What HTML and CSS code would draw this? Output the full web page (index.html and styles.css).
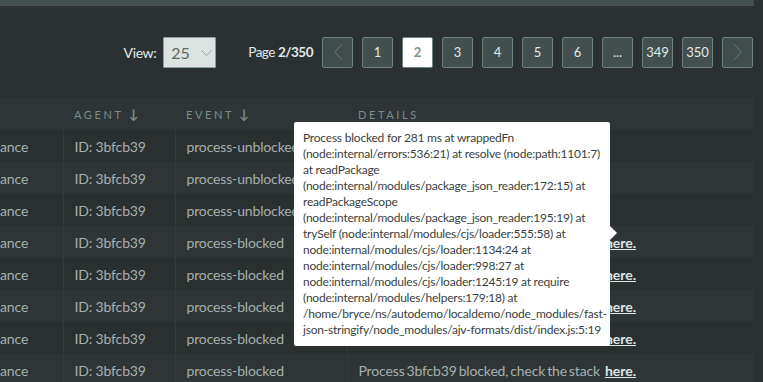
FILE: index.html
```html
<!DOCTYPE html>
<html lang="en">
<head>
<meta charset="utf-8">
<title>Events</title>
<link rel="stylesheet" href="styles.css">
</head>
<body>
<div class="app">
  <div class="topbar"></div>
  <div class="toolbar">
    <div class="view">
      <span class="view-label">View:</span>
      <span class="select">25
        <svg class="chev" width="11" height="6" viewBox="0 0 11 6"><path d="M0.5 0.5 L5.5 5.5 L10.5 0.5" fill="none" stroke="#9aa5a3" stroke-width="1"/></svg>
      </span>
    </div>
    <div class="pageinfo">Page <b>2/350</b></div>
    <nav class="pager">
      <button class="pbtn disabled"><svg width="8" height="16" viewBox="0 0 8 16"><path d="M7.5 0.5 L0.8 8 L7.5 15.5" fill="none" stroke="#6b7b79" stroke-width="1"/></svg></button>
      <button class="pbtn">1</button>
      <button class="pbtn active">2</button>
      <button class="pbtn">3</button>
      <button class="pbtn">4</button>
      <button class="pbtn">5</button>
      <button class="pbtn">6</button>
      <button class="pbtn">...</button>
      <button class="pbtn">349</button>
      <button class="pbtn">350</button>
      <button class="pbtn disabled"><svg width="8" height="16" viewBox="0 0 8 16"><path d="M0.5 0.5 L7.2 8 L0.5 15.5" fill="none" stroke="#6b7b79" stroke-width="1"/></svg></button>
    </nav>
  </div>
  <table class="events">
    <colgroup><col class="c1"><col class="c2"><col class="c3"><col class="c4"></colgroup>
    <thead>
      <tr><th></th><th>Agent <span class="arrow">&#8595;</span></th><th>Event <span class="arrow">&#8595;</span></th><th>Details</th></tr>
    </thead>
    <tbody>
      <tr><td class="cut">ance</td><td>ID: 3bfcb39</td><td>process-unblocked</td><td class="det">Process 3bfcb39 unblocked</td></tr>
      <tr><td class="cut">ance</td><td>ID: 3bfcb39</td><td>process-unblocked</td><td class="det">Process 3bfcb39 unblocked</td></tr>
      <tr><td class="cut">ance</td><td>ID: 3bfcb39</td><td>process-unblocked</td><td class="det">Process 3bfcb39 unblocked</td></tr>
      <tr><td class="cut">ance</td><td>ID: 3bfcb39</td><td>process-blocked</td><td class="det">Process 3bfcb39 blocked, check the stack <a href="#">here.</a></td></tr>
      <tr><td class="cut">ance</td><td>ID: 3bfcb39</td><td>process-blocked</td><td class="det">Process 3bfcb39 blocked, check the stack <a href="#">here.</a></td></tr>
      <tr><td class="cut">ance</td><td>ID: 3bfcb39</td><td>process-blocked</td><td class="det">Process 3bfcb39 blocked, check the stack <a href="#">here.</a></td></tr>
      <tr><td class="cut">ance</td><td>ID: 3bfcb39</td><td>process-blocked</td><td class="det">Process 3bfcb39 blocked, check the stack <a href="#">here.</a></td></tr>
      <tr><td class="cut">ance</td><td>ID: 3bfcb39</td><td>process-blocked</td><td class="det">Process 3bfcb39 blocked, check the stack <a href="#">here.</a></td></tr>
    </tbody>
  </table>
  <div class="tooltip">Process blocked for 281 ms at wrappedFn<br>(node:internal/errors:536:21) at resolve (node:path:1101:7)<br>at readPackage<br>(node:internal/modules/package_json_reader:172:15) at<br>readPackageScope<br>(node:internal/modules/package_json_reader:195:19) at<br>trySelf (node:internal/modules/cjs/loader:555:58) at<br>node:internal/modules/cjs/loader:1134:24 at<br>node:internal/modules/cjs/loader:998:27 at<br>node:internal/modules/cjs/loader:1245:19 at require<br>(node:internal/modules/helpers:179:18) at<br>/home/bryce/ns/autodemo/localdemo/node_modules/fast-<br>json-stringify/node_modules/ajv-formats/dist/index.js:5:19</div>
</div>
</body>
</html>
```

FILE: styles.css
```css
* { box-sizing: border-box; }
html, body { margin: 0; padding: 0; }
body {
  background: #2b3132;
  font-family: Lato, "Noto Sans", sans-serif;
  color: #a7b1af;
  overflow: hidden;
  height: 382px;
}
.app {
  position: relative;
  width: 754px;
}
.topbar {
  height: 6px;
  background: #435050;
}
.toolbar {
  height: 92px;
  display: flex;
  align-items: center;
  justify-content: flex-end;
  padding-right: 1px;
  color: #e2e8e6;
  font-size: 14px;
}
.view {
  display: flex;
  align-items: center;
  gap: 7px;
}
.view-label { letter-spacing: -0.4px; }
.select {
  width: 53px;
  height: 31px;
  background: #dce3e1;
  border: 1px solid #8aa09b;
  border-radius: 1px;
  color: #5d6866;
  font-size: 16px;
  display: flex;
  align-items: center;
  padding-left: 7px;
  gap: 11px;
}
.chev { margin-top: 1px; }
.pageinfo {
  margin-left: 32px;
  margin-right: 9px;
  font-size: 13.5px;
  letter-spacing: -0.5px;
}
.pageinfo b { font-weight: 700; }
.pager {
  display: flex;
  gap: 9px;
}
.pbtn {
  width: 31px;
  height: 31px;
  padding: 0;
  background: #424f4e;
  border: 1px solid #6e827e;
  border-radius: 2px;
  color: #e2e8e6;
  font-family: inherit;
  font-size: 13px;
  display: flex;
  align-items: center;
  justify-content: center;
}
.pbtn.active {
  background: #ffffff;
  color: #7a918d;
  font-weight: 700;
}
.pbtn.disabled { background: #414d4c; }
.events {
  width: 754px;
  border-collapse: collapse;
  table-layout: fixed;
  font-size: 14px;
}
.c1 { width: 63px; }
.c2 { width: 112px; }
.c3 { width: 172px; }
.events th {
  height: 32px;
  background: #2f3537;
  text-align: left;
  font-weight: 400;
  font-size: 11px;
  letter-spacing: 2.6px;
  text-transform: uppercase;
  color: #7c8b89;
  padding: 0 0 0 11px;
}
.events th .arrow { letter-spacing: 0; font-size: 13px; font-weight: 700; }
.events td {
  height: 32px;
  padding: 0 0 0 11px;
  white-space: nowrap;
  overflow: hidden;
  border-left: 1px solid #343b3c;
  letter-spacing: -0.15px;
}
.events td.det { word-spacing: -1.5px; }
.events td.cut { padding-left: 0; border-left: none; }
.events tbody tr:nth-child(odd) td { background: #2a2f30; }
.events tbody tr:nth-child(even) td { background: #2f3537; }
.events a {
  color: #dfe5e3;
  font-weight: 700;
  text-decoration: underline;
  margin-left: 3px;
  letter-spacing: 0;
}
.tooltip {
  position: absolute;
  left: 294px;
  top: 122px;
  width: 316px;
  height: 224px;
  background: #ffffff;
  color: #3a3f40;
  font-size: 12px;
  letter-spacing: -0.22px;
  line-height: 16px;
  padding: 8px 0 0 9px;
  white-space: nowrap;
  border-radius: 2px;
}
.tooltip::after {
  content: "";
  position: absolute;
  right: -7px;
  top: 104px;
  border-top: 7px solid transparent;
  border-bottom: 7px solid transparent;
  border-left: 7px solid #ffffff;
}
```
